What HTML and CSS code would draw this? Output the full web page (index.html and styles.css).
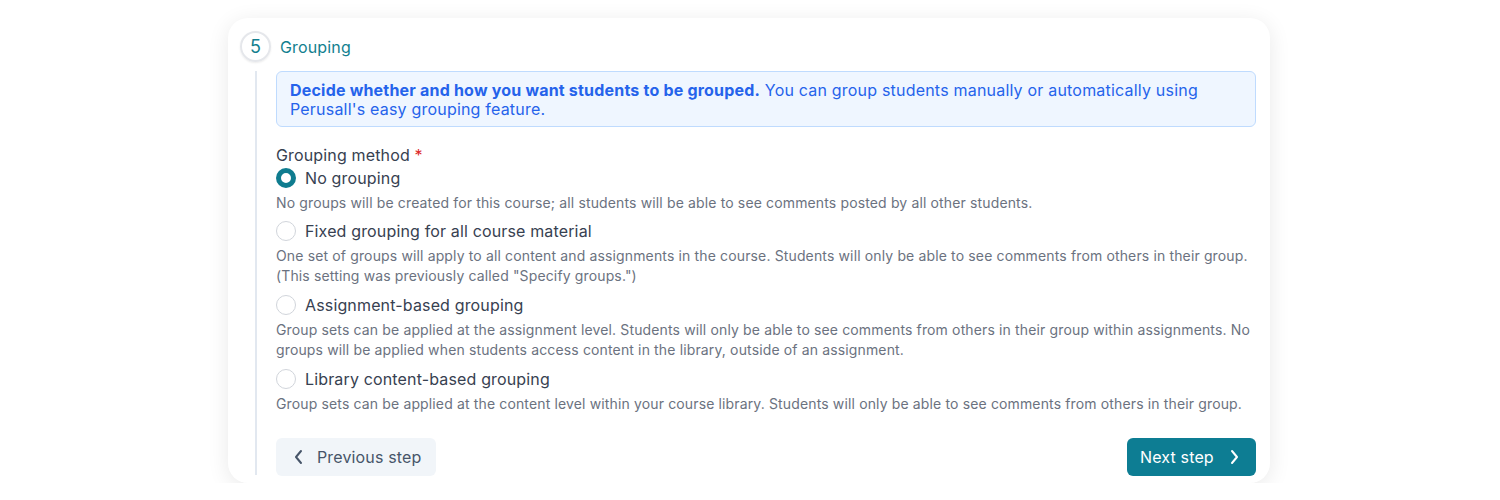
FILE: index.html
```html
<!DOCTYPE html>
<html>
<head>
<meta charset="utf-8">
<link rel="stylesheet" href="styles.css">
</head>
<body>
<div class="card">
  <div class="step-head">
    <div class="step-num">5</div>
    <div class="step-title">Grouping</div>
  </div>
  <div class="step-body">
    <div class="info">
      <strong>Decide whether and how you want students to be grouped.</strong> You can group students manually or automatically using Perusall's easy grouping feature.
    </div>
    <div class="field-label">Grouping method <span class="req">*</span></div>
    <div class="options">
      <div class="option">
        <div class="radio-row"><span class="radio checked"></span><span class="opt-label">No grouping</span></div>
        <div class="desc">No groups will be created for this course; all students will be able to see comments posted by all other students.</div>
      </div>
      <div class="option">
        <div class="radio-row"><span class="radio"></span><span class="opt-label">Fixed grouping for all course material</span></div>
        <div class="desc">One set of groups will apply to all content and assignments in the course. Students will only be able to see comments from others in their group.<br>(This setting was previously called "Specify groups.")</div>
      </div>
      <div class="option">
        <div class="radio-row"><span class="radio"></span><span class="opt-label">Assignment-based grouping</span></div>
        <div class="desc">Group sets can be applied at the assignment level. Students will only be able to see comments from others in their group within assignments. No groups will be applied when students access content in the library, outside of an assignment.</div>
      </div>
      <div class="option">
        <div class="radio-row"><span class="radio"></span><span class="opt-label">Library content-based grouping</span></div>
        <div class="desc">Group sets can be applied at the content level within your course library. Students will only be able to see comments from others in their group.</div>
      </div>
    </div>
    <div class="actions">
      <button class="btn btn-prev"><svg width="12" height="16" viewBox="0 0 12 16"><path d="M8 2 L3 8 L8 14" fill="none" stroke="currentColor" stroke-width="2" stroke-linecap="round" stroke-linejoin="round"/></svg><span>Previous step</span></button>
      <button class="btn btn-next"><span>Next step</span><svg width="12" height="16" viewBox="0 0 12 16"><path d="M4 2 L9 8 L4 14" fill="none" stroke="currentColor" stroke-width="2" stroke-linecap="round" stroke-linejoin="round"/></svg></button>
    </div>
  </div>
</div>
</body>
</html>
```

FILE: styles.css
```css
html, body {
  margin: 0;
  padding: 0;
  background: #ffffff;
}
body {
  font-family: Inter, "Noto Sans", sans-serif;
  color: #374151;
  padding-top: 18px;
  padding-left: 228px;
}
.card {
  box-sizing: border-box;
  width: 1042px;
  height: 465px;
  background: #fff;
  border-radius: 20px;
  box-shadow: 0 4px 22px rgba(0, 0, 0, 0.09);
  padding: 13px 14px 7px 12px;
}
.step-head {
  display: flex;
  align-items: center;
  gap: 9px;
  height: 31px;
}
.step-num {
  box-sizing: border-box;
  width: 31px;
  height: 31px;
  border-radius: 50%;
  border: 2px solid #e5e7eb;
  box-shadow: 0 1px 2px rgba(0,0,0,0.08);
  display: flex;
  align-items: center;
  justify-content: center;
  color: #137f8f;
  font-size: 18px;
}
.step-title {
  color: #137f8f;
  font-size: 16px;
  letter-spacing: 0.15px;
}
.step-body {
  margin-left: 15px;
  margin-top: 9px;
  border-left: 2px solid #e2e8f0;
  padding-left: 19px;
  height: 404px;
  display: flex;
  flex-direction: column;
}
.info {
  background: #eff6ff;
  border: 1px solid #bfdbfe;
  border-radius: 6px;
  padding: 9px 13px 7px;
  color: #2563eb;
  font-size: 16px;
  line-height: 19px;
  letter-spacing: 0.2px;
}
.info strong {
  font-weight: 700;
}
.field-label {
  margin-top: 18px;
  font-size: 16px;
  line-height: 20px;
  color: #374151;
  letter-spacing: 0.15px;
}
.req {
  color: #dc2626;
}
.options {
  margin-top: 3px;
  display: flex;
  flex-direction: column;
}
.option + .option {
  margin-top: 9px;
}
.option:nth-child(2) {
  margin-top: 8px;
}
.radio-row {
  display: flex;
  align-items: center;
  gap: 9px;
  height: 20px;
}
.radio {
  box-sizing: border-box;
  width: 20px;
  height: 20px;
  border-radius: 50%;
  border: 1px solid #d1d5db;
  background: #fff;
}
.radio.checked {
  border: 5px solid #0f7c8f;
}
.opt-label {
  font-size: 16px;
  color: #374151;
  letter-spacing: 0.15px;
}
.desc {
  margin-top: 5px;
  font-size: 14px;
  line-height: 20px;
  color: #6b7280;
  letter-spacing: 0.14px;
}
.actions {
  margin-top: auto;
  margin-bottom: -1px;
  display: flex;
  justify-content: space-between;
}
.btn {
  font-family: inherit;
  font-size: 16px;
  height: 38px;
  border: none;
  border-radius: 6px;
  display: flex;
  align-items: center;
  gap: 12px;
  white-space: nowrap;
  letter-spacing: 0.15px;
  cursor: pointer;
}
.btn-prev {
  background: #f1f5f9;
  color: #475569;
  padding: 0 14px 0 17px;
  width: 160px;
}
.btn-next {
  background: #0d7d93;
  color: #fff;
  padding: 0 13px;
  width: 129px;
  gap: 14px;
}
```
